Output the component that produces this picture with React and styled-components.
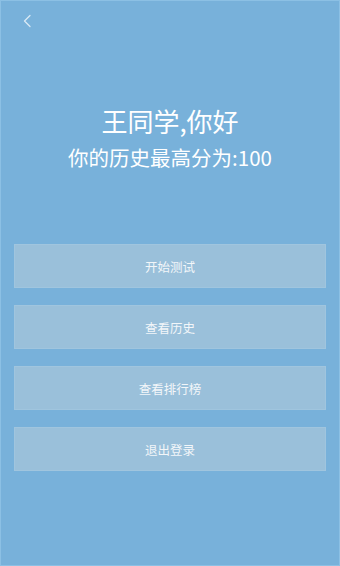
import React from "react";
import styled, { createGlobalStyle } from "styled-components";

const GlobalStyle = createGlobalStyle`
    html, body {
        margin: 0;
        padding: 0;
        background: #78b1da;
    }
    * {
        box-sizing: border-box;
    }
`;

const actions = ["开始测试", "查看历史", "查看排行榜", "退出登录"];

const App = () => {
    return (
        <>
            <GlobalStyle />
            <Page>
                <TopBar>
                    <BackButton aria-label="返回">
                        <svg width="10" height="14" viewBox="0 0 10 14">
                            <path
                                d="M8 1.5 L2.5 7 L8 12.5"
                                fill="none"
                                stroke="#d9e9f5"
                                strokeWidth="1.3"
                                strokeLinecap="round"
                                strokeLinejoin="round"
                            />
                        </svg>
                    </BackButton>
                </TopBar>
                <Greeting>
                    <Title>王同学,你好</Title>
                    <Score>你的历史最高分为:100</Score>
                </Greeting>
                <ActionList>
                    {actions.map((label) => (
                        <ActionButton key={label}>{label}</ActionButton>
                    ))}
                </ActionList>
            </Page>
        </>
    );
};

export default App;

const Page = styled.div`
    width: 340px;
    height: 566px;
    background-color: #78b1da;
    border: 1px solid #8cc0e4;
    display: flex;
    flex-direction: column;
    font-family: "Noto Sans CJK SC", "Noto Sans", sans-serif;
    color: #ffffff;
    overflow: hidden;
`;
const TopBar = styled.div`
    height: 40px;
    display: flex;
    align-items: center;
    padding: 0 0 0 19px;
`;
const BackButton = styled.div`
    width: 14px;
    height: 40px;
    display: flex;
    align-items: center;
    justify-content: center;
    margin-top: -1px;
    cursor: pointer;
`;
const Greeting = styled.div`
    margin-top: 62px;
    display: flex;
    flex-direction: column;
    align-items: center;
`;
const Title = styled.div`
    font-size: 26px;
    line-height: 36px;
`;
const Score = styled.div`
    margin-top: 3px;
    font-size: 20.5px;
    line-height: 30px;
`;
const ActionList = styled.div`
    margin-top: 72px;
    padding: 0 13px;
    display: flex;
    flex-direction: column;
    gap: 17px;
`;
const ActionButton = styled.div`
    height: 44px;
    background-color: #9ac0da;
    border: 1px solid #a0c5de;
    color: #f2f6f9;
    font-size: 12.5px;
    display: flex;
    align-items: center;
    justify-content: center;
    cursor: pointer;
`;
